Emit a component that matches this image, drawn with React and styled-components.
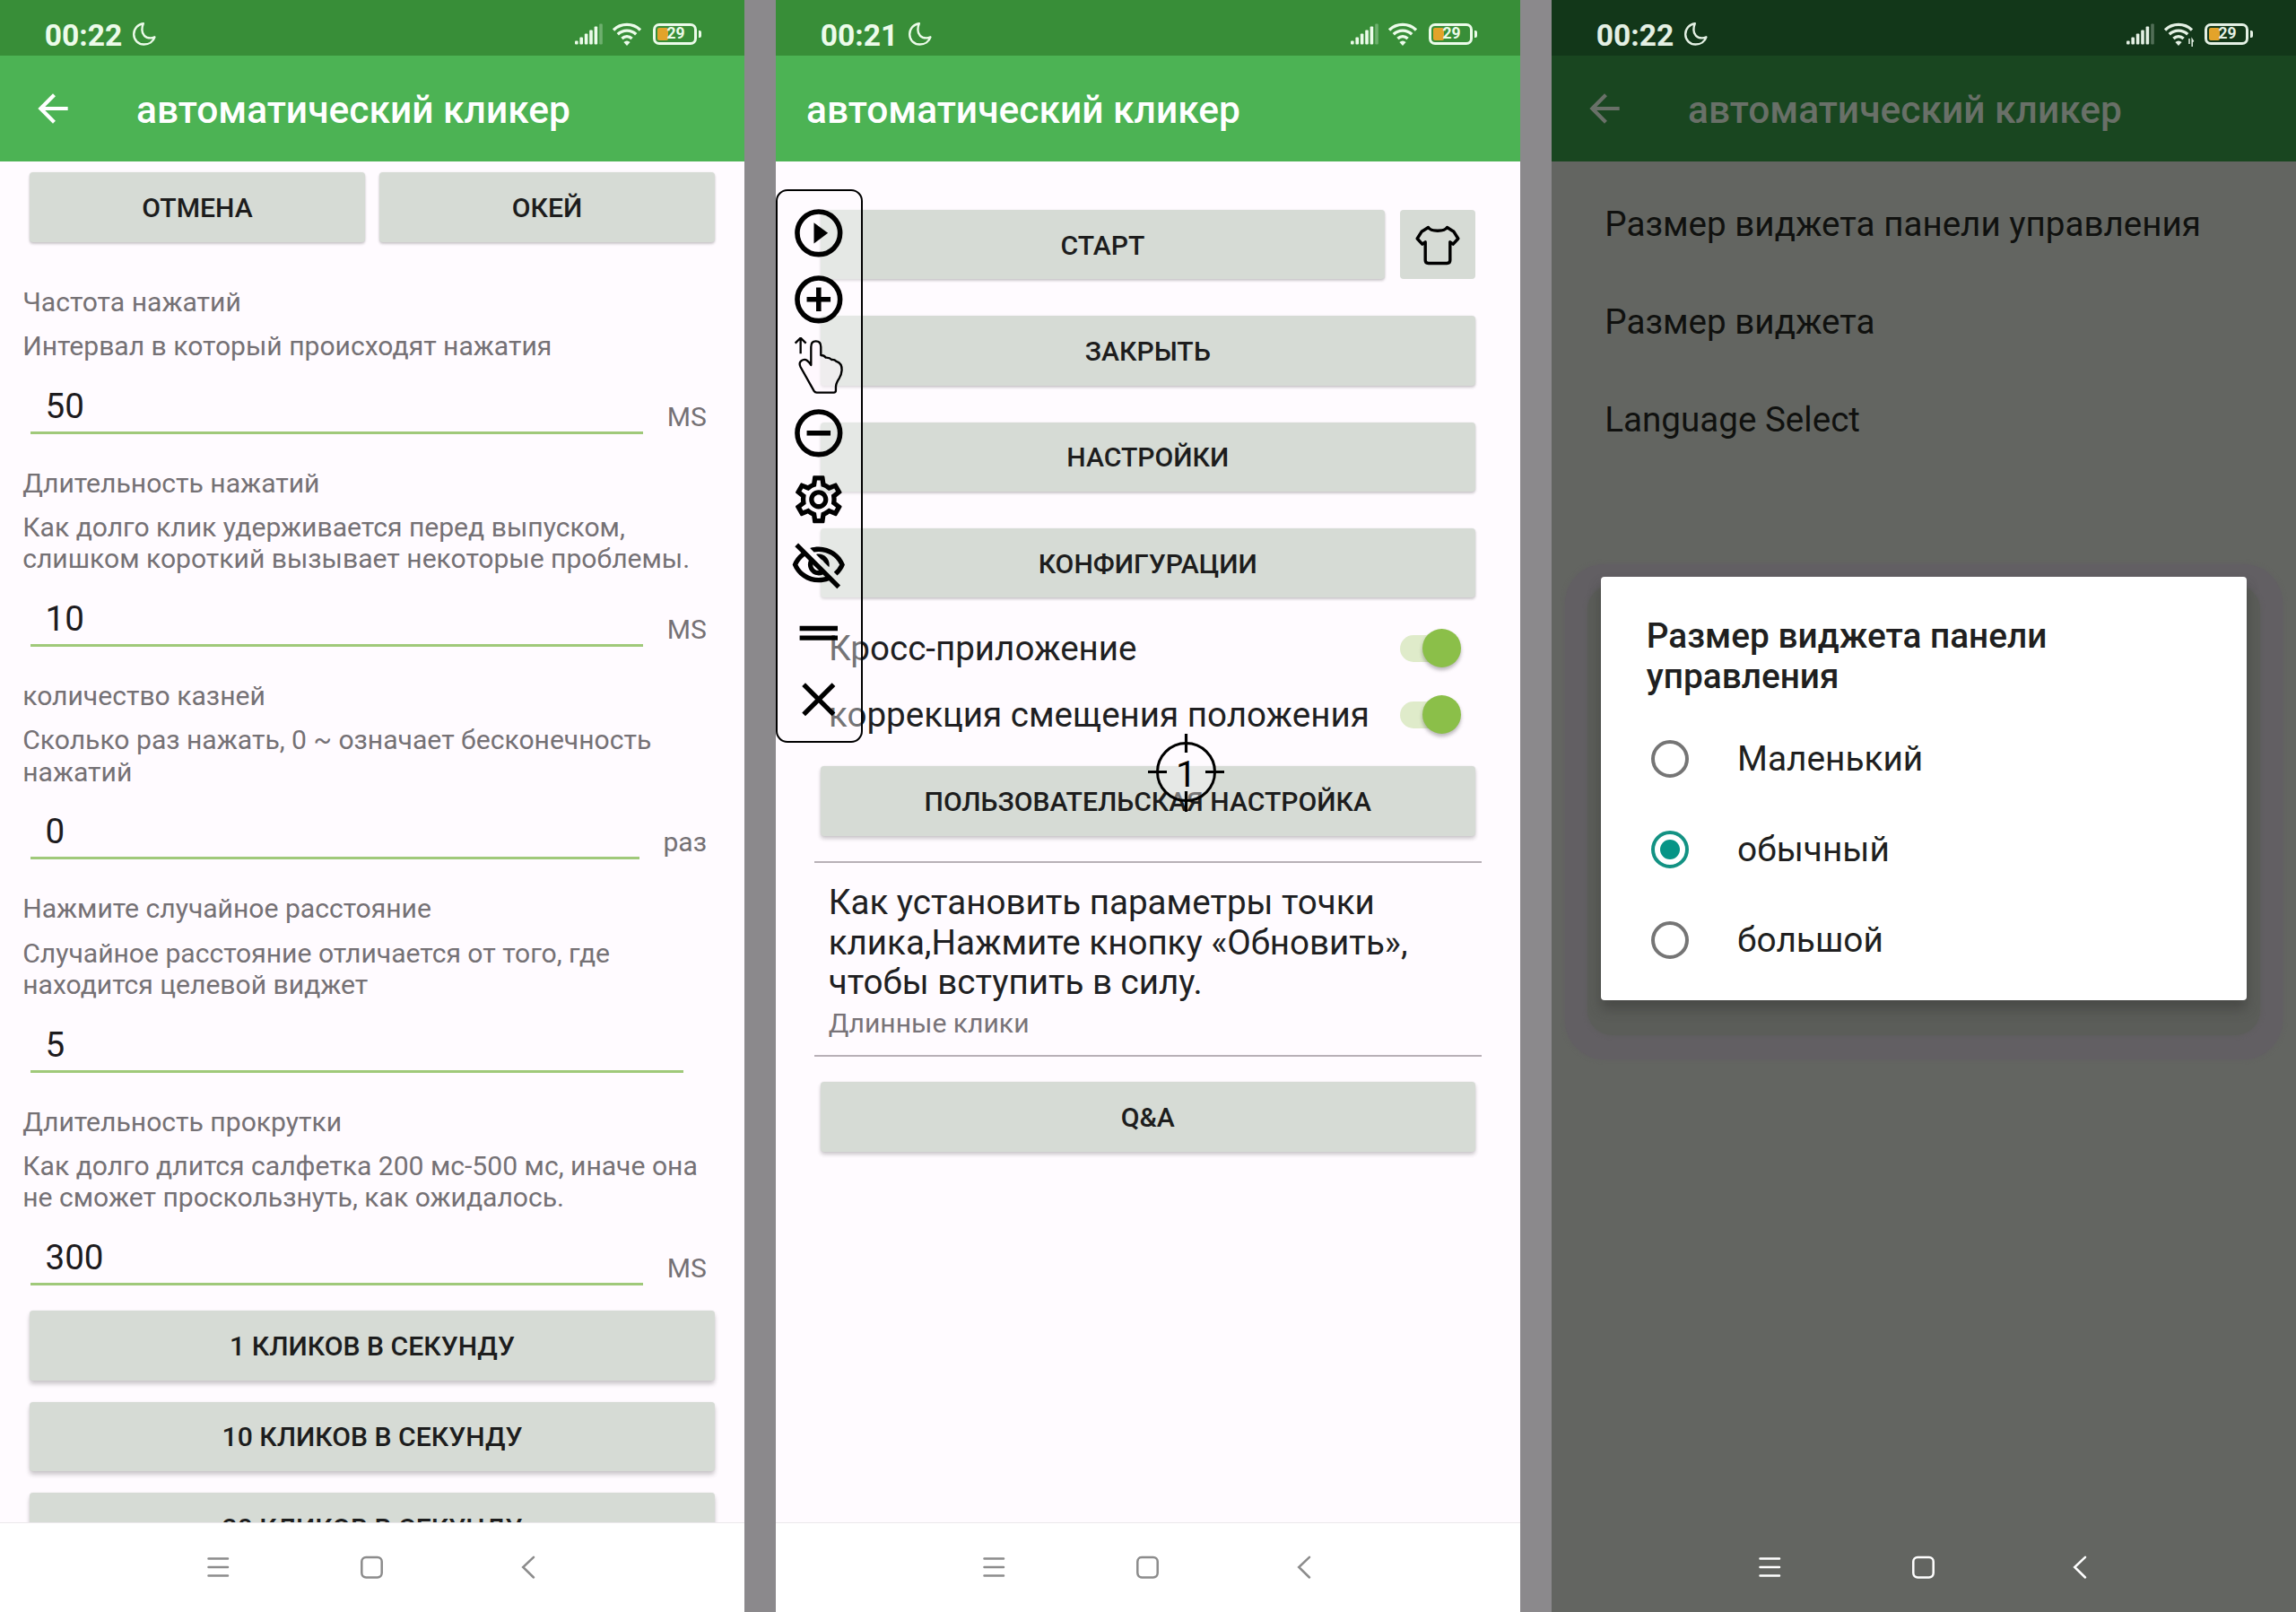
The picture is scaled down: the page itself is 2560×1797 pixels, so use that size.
import React from 'react';
import styled, { createGlobalStyle } from 'styled-components';
import { MdArrowBack, MdClose, MdDragHandle, MdOutlineSettings, MdOutlineVisibilityOff } from 'react-icons/md';

const GlobalStyle = createGlobalStyle`
  * {
    box-sizing: border-box;
  }
  body {
    margin: 0;
    background: #8b898c;
    font-family: Roboto, 'Noto Sans', sans-serif;
  }
`;

const Page = styled.div`
  display: flex;
  justify-content: space-between;
  width: 2560px;
  height: 1797px;
  background: #8b898c;
  overflow: hidden;
`;

const Phone = styled.section`
  position: relative;
  display: flex;
  flex-direction: column;
  width: 830px;
  height: 1797px;
  flex-shrink: 0;
  overflow: hidden;
  background: ${({ $dim }) => ($dim ? '#636561' : '#fffbff')};
`;

const StatusBar = styled.div`
  display: flex;
  align-items: center;
  height: 61.5px;
  padding: 14px 53px 0 49.8px;
  flex-shrink: 0;
  color: ${({ $dim }) => ($dim ? '#e4f0e4' : '#ecfbea')};
  background: ${({ $dim }) => ($dim ? '#123719' : '#388e38')};
`;

const Time = styled.span`
  margin-top: 4.5px;
  font-size: 33.6px;
  font-weight: 700;
  line-height: 40px;
`;

const StatusIcons = styled.div`
  display: flex;
  align-items: center;
  margin-left: auto;
`;

const Battery = styled.div`
  position: relative;
  display: flex;
  align-items: center;
  justify-content: center;
  width: 49px;
  height: 24px;
  margin-left: 5px;
  border: 3px solid currentColor;
  border-radius: 7px;
  font-size: 17.5px;
  font-weight: 700;
  line-height: 17px;

  &::after {
    content: '';
    position: absolute;
    right: -7.5px;
    top: 5px;
    width: 3px;
    height: 8px;
    border-radius: 0 2px 2px 0;
    background: currentColor;
  }
`;

const BatteryFill = styled.div`
  position: absolute;
  left: 2px;
  top: 2px;
  bottom: 2px;
  width: 12px;
  border-radius: 2px;
  background: #e3a32a;
`;

const BatteryText = styled.span`
  position: relative;
  margin-left: 2px;
`;

const AppBar = styled.header`
  display: flex;
  align-items: center;
  height: 118.5px;
  padding-left: 34px;
  flex-shrink: 0;
  color: ${({ $dim }) => ($dim ? '#697068' : '#ffffff')};
  background: ${({ $dim }) => ($dim ? '#194620' : '#4cb354')};
`;

const BackIcon = styled(MdArrowBack)`
  width: 50px;
  height: 50px;
  margin: 0 68px 0 0;
`;

const AppTitle = styled.h1`
  margin: 0;
  padding-top: 4.5px;
  font-size: 42.5px;
  font-weight: 500;
  line-height: 50px;
  white-space: nowrap;
`;

const Body = styled.main`
  position: relative;
  display: flex;
  flex-direction: column;
  height: 1517px;
  flex-shrink: 0;
  overflow: hidden;
  padding: ${({ $padding }) => $padding || '0'};
`;

const NavBar = styled.nav`
  display: flex;
  align-items: center;
  justify-content: center;
  height: 100px;
  padding: 0 1.4px 2px 0;
  flex-shrink: 0;
  color: ${({ $dim }) => ($dim ? '#ffffff' : '#8c8c8c')};
  background: ${({ $dim }) => ($dim ? '#636561' : '#ffffff')};
  border-top: 1.5px solid ${({ $dim }) => ($dim ? '#636561' : '#ebe8eb')};
`;

const Button = styled.button`
  flex: ${({ $grow }) => ($grow ? '1 1 0' : '0 0 auto')};
  height: 77.5px;
  margin: 0;
  padding: 2px 0 0;
  border: 0;
  border-radius: 4px;
  background: #d6dbd5;
  color: #1d1d1d;
  font-family: inherit;
  font-size: 30.15px;
  font-weight: 500;
  line-height: 36px;
  box-shadow: ${({ $lift }) => `0 ${$lift || 2}px ${($lift || 2) + 1}px rgba(0, 0, 0, 0.2)`}, 0 0 2px rgba(0, 0, 0, 0.08);
`;

const ButtonRow = styled.div`
  display: flex;
  gap: ${({ $gap }) => $gap}px;
  flex-shrink: 0;
`;

const ActionRow = styled(ButtonRow)`
  padding: 0 33px;
  margin-bottom: 49.6px;
`;

const Field = styled.div`
  flex-shrink: 0;
  padding: 0 42px 0 25.2px;
  margin-bottom: ${({ $last }) => ($last ? 28.4 : 37.2)}px;
  color: #757175;
  font-size: 30.1px;
  line-height: 35.5px;
`;

const FieldLabel = styled.div`
  margin-bottom: 13.6px;
`;

const InputRow = styled.div`
  display: flex;
  align-items: flex-end;
  gap: 26.5px;
  height: 80px;
  padding-left: 8.8px;
`;

const Value = styled.div`
  flex: 1;
  padding: 0 0 5.3px 16.5px;
  border-bottom: 3px solid #a0c97a;
  color: #1d1b1e;
  font-size: 38.6px;
  line-height: 44.6px;
`;

const Unit = styled.div`
  margin-bottom: 1.6px;
`;

const Presets = styled.div`
  display: flex;
  flex-direction: column;
  gap: 24px;
  padding: 0 33px;
`;

const MenuStack = styled.div`
  display: flex;
  flex-direction: column;
  gap: 40.9px;
`;

const IconButton = styled(Button)`
  display: flex;
  align-items: center;
  justify-content: center;
  width: 84px;
  padding: 0;
  color: #000;
  box-shadow: none;
`;

const SwitchList = styled.div`
  margin: 19.4px 16px 20.6px 9px;
`;

const SwitchRow = styled.div`
  display: flex;
  align-items: center;
  justify-content: space-between;
  height: 74px;
  color: #201f22;
  font-size: 38.55px;
  line-height: 45px;
  white-space: nowrap;
`;

const SwitchTrack = styled.div`
  display: flex;
  align-items: center;
  justify-content: flex-end;
  width: 68px;
  height: 30px;
  border-radius: 15px;
  background: linear-gradient(90deg, #dfebca 60px, transparent 60px);
`;

const SwitchThumb = styled.div`
  width: 43px;
  height: 43px;
  border-radius: 50%;
  background: #8bbf49;
  box-shadow: 0 3px 4px rgba(0, 0, 0, 0.28);
`;

const Hint = styled.div`
  flex-shrink: 0;
  margin: 28px -7.5px 28.8px -7.3px;
  padding: 22.2px 16px 17.2px;
  border-top: 2px solid #b8b0b7;
  border-bottom: 2px solid #b8b0b7;
  color: #201f22;
  font-size: 38.55px;
  line-height: 44.6px;
`;

const HintNote = styled.div`
  margin-top: 5px;
  color: #787378;
  font-size: 30.1px;
  line-height: 35.5px;
`;

// floating panel that lies over the menu buttons
const ControlPanel = styled.div`
  position: absolute;
  left: 0;
  top: 30.5px;
  z-index: 2;
  display: flex;
  flex-direction: column;
  align-items: center;
  width: 96.5px;
  height: 617px;
  padding-top: 15px;
  border: 2px solid #000;
  border-radius: 13px;
  background: rgba(255, 252, 255, 0.38);
  color: #000;

  svg {
    width: 63.6px;
    height: 63.6px;
    margin-bottom: 10.75px;
    flex-shrink: 0;
  }
`;

const Target = styled.svg`
  position: absolute;
  left: 414.7px;
  top: 637.5px;
  z-index: 2;
  width: 85px;
  height: 87px;
`;

const ListItem = styled.div`
  display: flex;
  align-items: center;
  height: 109.2px;
  padding: 0.5px 0 0 59.3px;
  color: #10110f;
  font-size: 38.6px;
  white-space: nowrap;
`;

// stepped halo behind the dialog
const Halo = styled.div`
  position: absolute;
  left: ${({ $spread }) => 55 - $spread}px;
  top: ${({ $spread, $drop }) => 642.5 - $spread + $drop}px;
  width: ${({ $spread }) => 719.5 + $spread * 2}px;
  height: ${({ $spread }) => 472.5 + $spread * 2}px;
  border-radius: ${({ $radius }) => $radius}px;
  background: ${({ $color }) => $color};
  box-shadow: 0 0 5px ${({ $color }) => $color};
`;

const Dialog = styled.div`
  position: absolute;
  left: 55px;
  top: 642.5px;
  width: 719.5px;
  height: 472.5px;
  padding: 44.3px 49.3px 0 50.8px;
  border-radius: 4px;
  background: #fff;
  color: #201f20;
  box-shadow: 0 10px 14px rgba(50, 52, 48, 0.45);
`;

const DialogTitle = styled.h2`
  margin: 0 0 18.6px;
  font-size: 38.8px;
  font-weight: 500;
  line-height: 44.8px;
`;

const Option = styled.div`
  display: flex;
  align-items: center;
  gap: 54.5px;
  height: 101.2px;
  padding-left: 4.8px;
  font-size: 38.8px;
`;

const Radio = styled.span`
  display: flex;
  align-items: center;
  justify-content: center;
  width: 42px;
  height: 42px;
  border: 4.2px solid ${({ $checked }) => ($checked ? '#139283' : '#757575')};
  border-radius: 50%;

  &::after {
    content: '';
    width: 22px;
    height: 22px;
    border-radius: 50%;
    background: ${({ $checked }) => ($checked ? '#069486' : 'transparent')};
  }
`;

const MoonSvg = styled.svg`
  width: 28px;
  height: 28px;
  margin: 0 0 0 10.5px;
`;

const Moon = () => (
  <MoonSvg viewBox="0 0 28 28" fill="none" stroke="currentColor" strokeWidth="2.4" strokeLinejoin="round">
    <path d="M12.8 2.2C6.5 3 2.2 8 2.2 14.3c0 6.4 5 11.2 11.3 11.2 5.6 0 10.4-3.2 11.9-8.2-1.7.8-3.1 1.1-4.7 1.1-5.6 0-9.3-3.9-9.3-9.1 0-2.6.4-4.900 1.400-7.100z" />
  </MoonSvg>
);

const bars = [4, 8, 12, 16, 20];

const Signal = () => (
  <svg width="32" height="24" viewBox="0 0 32 24" fill="currentColor">
    {bars.map((h, i) => (
      <rect key={h} x={i * 5.4} y={23.5 - h} width="3.6" height={h} rx="1" />
    ))}
    <rect x="27.2" y="0.5" width="3.6" height="23" rx="1" opacity="0.3" />
  </svg>
);

const Wifi = ({ transfer }) => (
  <svg width="50" height="28" viewBox="-10 0 50 28" fill="none" stroke="currentColor" strokeWidth="3.4">
    <path d="M1 9.4C9.4 1.4 22.6 1.4 31 9.4" />
    <path d="M5.8 14.2C11.6 8.8 20.4 8.8 26.2 14.2" />
    <path d="M10.4 19C13.8 15.8 18.2 15.8 21.6 19" />
    <path d="M16 27L12.4 23Q16 19.8 19.6 23Z" fill="currentColor" stroke="none" />
    {transfer && <path d="M28 19v6M31.2 28v-8l1.5 2.5" strokeWidth="1.5" />}
  </svg>
);

const Shirt = () => (
  <svg width="50" height="46" viewBox="0 0 50 46" fill="none" stroke="currentColor" strokeWidth="3.4" strokeLinejoin="round">
    <path d="M14.5 3.5C17.5 8.5 32.5 8.5 35.5 3.5L43 8.3 47.8 16 42.2 22.2 38.8 19.8V40Q38.8 43.5 35.3 43.5H14.7Q11.2 43.5 11.2 40V19.8L7.8 22.2 2.2 16 7 8.3Z" />
  </svg>
);

const PlayCircle = () => (
  <svg viewBox="0 0 24 24">
    <circle cx="12" cy="12" r="9" fill="none" stroke="currentColor" strokeWidth="2.1" />
    <path d="M10 7.6v8.8l5.9-4.4z" fill="currentColor" />
  </svg>
);

const SignCircle = ({ plus }) => (
  <svg viewBox="0 0 24 24" fill="none" stroke="currentColor" strokeWidth="2.1">
    <circle cx="12" cy="12" r="9" />
    <path d={plus ? 'M7 12h10M12 7v10' : 'M7 12h10'} />
  </svg>
);

const SwipeHand = () => (
  <svg viewBox="64 528 191 191" fill="none" stroke="currentColor" strokeWidth="7" strokeLinejoin="round">
    <path d="M99 583V530M81 548l18-18 18 18" />
    <path
      fill="rgba(255, 244, 252, 0.4)"
      d="M134 621V560Q134 541 150 541Q167 541 167 560V588Q178 588 183 596Q196 595 203 603Q213 602 219 609Q238 615 237 638Q236 652 229 664Q217 682 217 694V706Q217 713 210 713H153Q147 713 144 708L99 628Q92 614 101 607Q112 599 121 606Q130 613 134 621Z"
    />
  </svg>
);

const NavIcons = () => (
  <svg width="366" height="28" viewBox="0 0 366 28" fill="none" stroke="currentColor" strokeWidth="2.5" strokeLinecap="round">
    <path d="M1.5 4.5h21.5M1.5 14h21.5M1.5 23.5h21.5" />
    <rect x="172.3" y="3" width="22.4" height="22.4" rx="4.8" />
    <path d="M364 2.8L352.2 14l11.8 11.5" />
  </svg>
);

const Status = ({ time, dim, transfer }) => (
  <StatusBar $dim={dim}>
    <Time>{time}</Time>
    <Moon />
    <StatusIcons>
      <Signal />
      <Wifi transfer={transfer} />
      <Battery>
        <BatteryFill />
        <BatteryText>29</BatteryText>
      </Battery>
    </StatusIcons>
  </StatusBar>
);

const fields = [
  { label: 'Частота нажатий', lines: ['Интервал в который происходят нажатия'], value: '50', unit: 'MS' },
  { label: 'Длительность нажатий', lines: ['Как долго клик удерживается перед выпуском,', 'слишком короткий вызывает некоторые проблемы.'], value: '10', unit: 'MS' },
  { label: 'количество казней', lines: ['Сколько раз нажать, 0 ~ означает бесконечность', 'нажатий'], value: '0', unit: 'раз' },
  { label: 'Нажмите случайное расстояние', lines: ['Случайное расстояние отличается от того, где', 'находится целевой виджет'], value: '5', unit: '' },
  { label: 'Длительность прокрутки', lines: ['Как долго длится салфетка 200 мс-500 мс, иначе она', 'не сможет проскользнуть, как ожидалось.'], value: '300', unit: 'MS' },
];

const presets = ['1 КЛИКОВ В СЕКУНДУ', '10 КЛИКОВ В СЕКУНДУ', '20 КЛИКОВ В СЕКУНДУ'];
const menu = ['ЗАКРЫТЬ', 'НАСТРОЙКИ', 'КОНФИГУРАЦИИ'];
const switches = ['Кросс-приложение', 'коррекция смещения положения'];
const settings = ['Размер виджета панели управления', 'Размер виджета', 'Language Select'];
const sizes = ['Маленький', 'обычный', 'большой'];

const ClickSettings = () => (
  <Phone>
    <Status time="00:22" />
    <AppBar>
      <BackIcon />
      <AppTitle>автоматический кликер</AppTitle>
    </AppBar>
    <Body $padding="12px 0 0">
      <ActionRow $gap={16}>
        <Button $grow>ОТМЕНА</Button>
        <Button $grow>ОКЕЙ</Button>
      </ActionRow>
      {fields.map((field, index) => (
        <Field key={field.label} $last={index === fields.length - 1}>
          <FieldLabel>{field.label}</FieldLabel>
          {field.lines.map((line) => <div key={line}>{line}</div>)}
          <InputRow>
            <Value>{field.value}</Value>
            <Unit>{field.unit}</Unit>
          </InputRow>
        </Field>
      ))}
      <Presets>
        {presets.map((preset) => <Button key={preset} $lift={4}>{preset}</Button>)}
      </Presets>
    </Body>
    <NavBar><NavIcons /></NavBar>
  </Phone>
);

const MainMenu = () => (
  <Phone>
    <Status time="00:21" />
    <AppBar>
      <AppTitle>автоматический кликер</AppTitle>
    </AppBar>
    <Body $padding="53.8px 50.5px 0 50px">
      <MenuStack>
        <ButtonRow $gap={16.5}>
          <Button $grow>СТАРТ</Button>
          <IconButton><Shirt /></IconButton>
        </ButtonRow>
        {menu.map((item) => <Button key={item}>{item}</Button>)}
      </MenuStack>
      <SwitchList>
        {switches.map((label) => (
          <SwitchRow key={label}>
            {label}
            <SwitchTrack><SwitchThumb /></SwitchTrack>
          </SwitchRow>
        ))}
      </SwitchList>
      <Button $lift={3}>ПОЛЬЗОВАТЕЛЬСКАЯ НАСТРОЙКА</Button>
      <Hint>
        Как установить параметры точки<br />
        клика,Нажмите кнопку «Обновить»,<br />
        чтобы вступить в силу.
        <HintNote>Длинные клики</HintNote>
      </Hint>
      <Button $lift={3}>Q&amp;A</Button>
      <ControlPanel>
        <PlayCircle />
        <SignCircle plus />
        <SwipeHand />
        <SignCircle />
        <MdOutlineSettings />
        <MdOutlineVisibilityOff />
        <MdDragHandle />
        <MdClose />
      </ControlPanel>
      <Target viewBox="0 0 85 87" fill="none" stroke="#000">
        <circle cx="42.5" cy="42.5" r="32" strokeWidth="3" fill="rgba(255, 252, 255, 0.4)" />
        <path d="M0 42.5h21M64 42.5h21M42.5 0v21M42.5 64v23" strokeWidth="3.2" />
        <text x="42.5" y="59" fontSize="41" textAnchor="middle" fill="#000" stroke="none">1</text>
      </Target>
    </Body>
    <NavBar><NavIcons /></NavBar>
  </Phone>
);

const WidgetSize = () => (
  <Phone $dim>
    <Status time="00:22" dim transfer />
    <AppBar $dim>
      <BackIcon />
      <AppTitle>автоматический кликер</AppTitle>
    </AppBar>
    <Body $padding="14.7px 0 0">
      {settings.map((item) => <ListItem key={item}>{item}</ListItem>)}
    </Body>
    <NavBar $dim><NavIcons /></NavBar>
    <Halo $spread={40} $drop={26} $radius={44} $color="#625f63" />
    <Halo $spread={15} $drop={24} $radius={28} $color="#5b5d59" />
    <Dialog>
      <DialogTitle>Размер виджета панели управления</DialogTitle>
      {sizes.map((size) => (
        <Option key={size}>
          <Radio $checked={size === 'обычный'} />
          {size}
        </Option>
      ))}
    </Dialog>
  </Phone>
);

const App = () => (
  <Page>
    <GlobalStyle />
    <ClickSettings />
    <MainMenu />
    <WidgetSize />
  </Page>
);

export default App;
